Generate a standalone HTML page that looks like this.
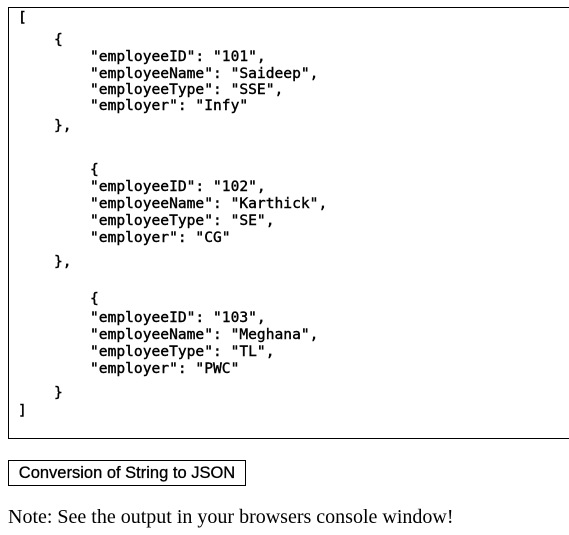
<!DOCTYPE html>
<html><head><style>
body{margin:0;width:569px;height:535px;background:#fff;position:relative;overflow:hidden}
.box{position:absolute;left:8px;top:7px;width:570px;height:430px;border:1px solid #000;border-right:none}
.l{position:absolute;font-family:"DejaVu Sans Mono","Liberation Mono",monospace;font-size:14.6px;line-height:16px;white-space:pre;color:#000;transform:translateY(-8px);-webkit-text-stroke:0.4px #000}
.btn{position:absolute;left:8px;top:460px;width:236px;height:24px;border:1px solid #000;font-family:"Liberation Sans",Arial,sans-serif;font-size:16.5px;line-height:24px;text-align:center;background:#fff;-webkit-text-stroke:0.3px #000;white-space:nowrap}
.note{position:absolute;left:8px;top:506px;font-family:"Liberation Serif",serif;font-size:20px;white-space:nowrap}
</style></head><body>
<div class="box"></div>
<div class="l" style="left:18px;top:18px">[</div>
<div class="l" style="left:54px;top:40px">{</div>
<div class="l" style="left:90px;top:57px">"employeeID": "101",</div>
<div class="l" style="left:90px;top:74px">"employeeName": "Saideep",</div>
<div class="l" style="left:90px;top:90px">"employeeType": "SSE",</div>
<div class="l" style="left:90px;top:106px">"employer": "Infy"</div>
<div class="l" style="left:54px;top:126px">},</div>
<div class="l" style="left:90px;top:170px">{</div>
<div class="l" style="left:90px;top:187px">"employeeID": "102",</div>
<div class="l" style="left:90px;top:204px">"employeeName": "Karthick",</div>
<div class="l" style="left:90px;top:221px">"employeeType": "SE",</div>
<div class="l" style="left:90px;top:238px">"employer": "CG"</div>
<div class="l" style="left:54px;top:262px">},</div>
<div class="l" style="left:90px;top:299px">{</div>
<div class="l" style="left:90px;top:318px">"employeeID": "103",</div>
<div class="l" style="left:90px;top:335px">"employeeName": "Meghana",</div>
<div class="l" style="left:90px;top:352px">"employeeType": "TL",</div>
<div class="l" style="left:90px;top:369px">"employer": "PWC"</div>
<div class="l" style="left:54px;top:393px">}</div>
<div class="l" style="left:18px;top:411px">]</div>
<div class="btn">Conversion of String to JSON</div>
<div class="note">Note: See the output in your browsers console window!</div>
</body></html>
